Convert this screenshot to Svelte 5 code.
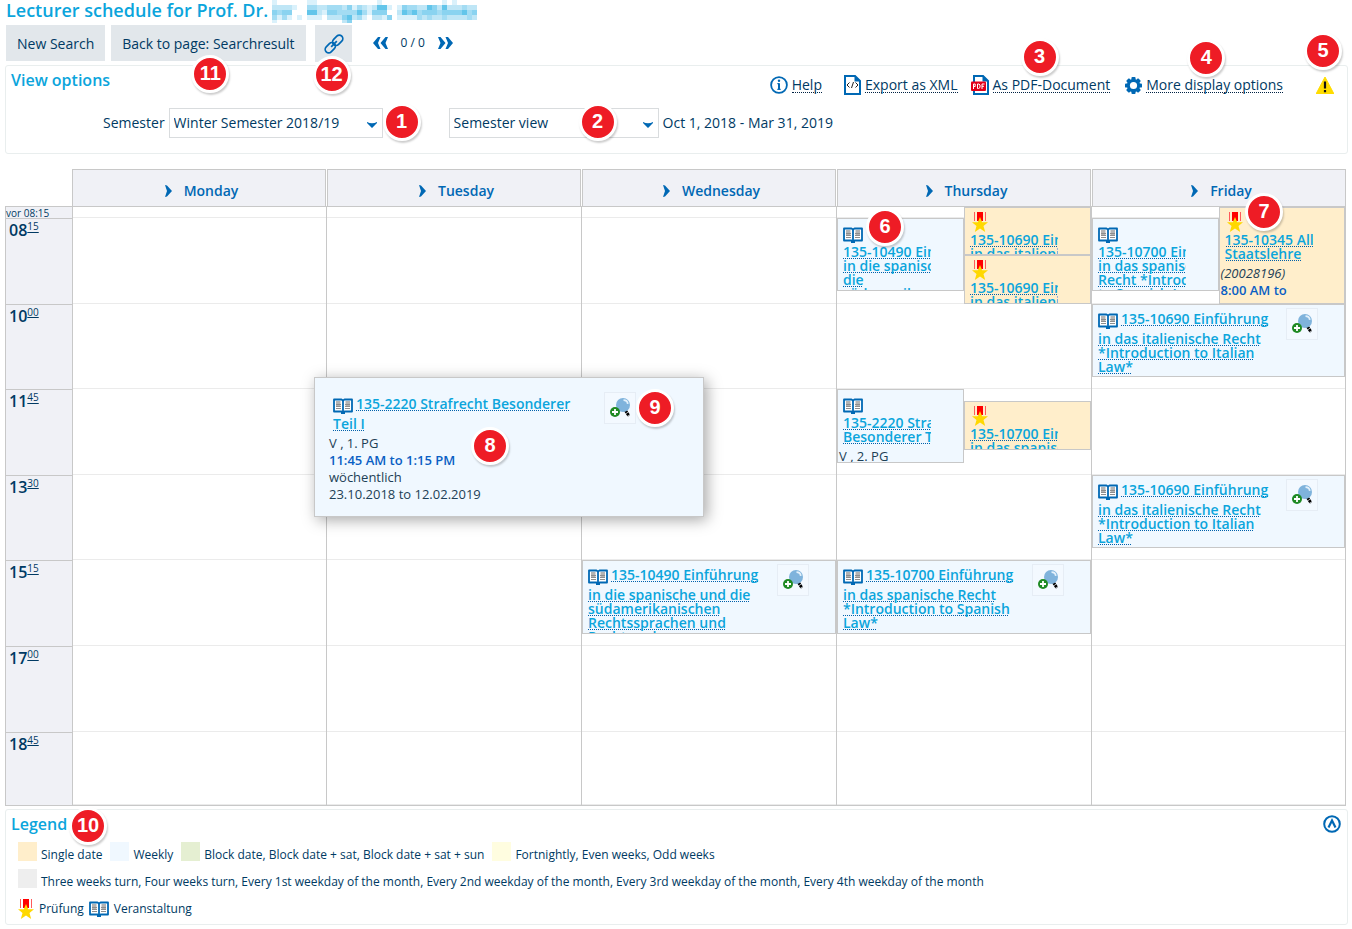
<script lang="ts">
  type Entry = {
    kind: 'book' | 'exam'
    rows: string
    cols: string
    lines: string[]
    wide?: boolean
    note?: string
    number?: string
    time?: string
  }

  // grid rows are quarter hours, row 1 is the strip before 08:15
  const days: { name: string; entries: Entry[] }[] = [
    { name: 'Monday', entries: [] },
    { name: 'Tuesday', entries: [] },
    {
      name: 'Wednesday',
      entries: [
        {
          kind: 'book',
          rows: '30 / 36',
          cols: '1 / 3',
          wide: true,
          lines: ['135-10490 Einführung', 'in die spanische und die', 'südamerikanischen', 'Rechtssprachen und', 'Rechtsordnungen'],
        },
      ],
    },
    {
      name: 'Thursday',
      entries: [
        { kind: 'book', rows: '2 / 8', cols: '1 / 2', lines: ['135-10490 Einführung', 'in die spanische und', 'die', 'südamerikanischen'] },
        { kind: 'exam', rows: '1 / 5', cols: '2 / 3', lines: ['135-10690 Einführung', 'in das italienische'] },
        { kind: 'exam', rows: '5 / 9', cols: '2 / 3', lines: ['135-10690 Einführung', 'in das italienische'] },
        { kind: 'book', rows: '16 / 22', cols: '1 / 2', lines: ['135-2220 Strafrecht', 'Besonderer Teil I'], note: 'V , 2. PG' },
        { kind: 'exam', rows: '17 / 21', cols: '2 / 3', lines: ['135-10700 Einführung', 'in das spanische'] },
        {
          kind: 'book',
          rows: '30 / 36',
          cols: '1 / 3',
          wide: true,
          lines: ['135-10700 Einführung', 'in das spanische Recht', '*Introduction to Spanish', 'Law*'],
        },
      ],
    },
    {
      name: 'Friday',
      entries: [
        { kind: 'book', rows: '2 / 8', cols: '1 / 2', lines: ['135-10700 Einführung', 'in das spanische', 'Recht *Introduction', 'to Spanish Law*'] },
        {
          kind: 'exam',
          rows: '1 / 9',
          cols: '2 / 3',
          lines: ['135-10345 Allgemeine', 'Staatslehre'],
          number: '(20028196)',
          time: '8:00 AM to',
        },
        {
          kind: 'book',
          rows: '9 / 15',
          cols: '1 / 3',
          wide: true,
          lines: ['135-10690 Einführung', 'in das italienische Recht', '*Introduction to Italian', 'Law*'],
        },
        {
          kind: 'book',
          rows: '23 / 29',
          cols: '1 / 3',
          wide: true,
          lines: ['135-10690 Einführung', 'in das italienische Recht', '*Introduction to Italian', 'Law*'],
        },
      ],
    },
  ]

  const slots = [
    { hour: '08', min: '15', rows: '2 / 9' },
    { hour: '10', min: '00', rows: '9 / 16' },
    { hour: '11', min: '45', rows: '16 / 23' },
    { hour: '13', min: '30', rows: '23 / 30' },
    { hour: '15', min: '15', rows: '30 / 37' },
    { hour: '17', min: '00', rows: '37 / 44' },
    { hour: '18', min: '45', rows: '44 / 50' },
  ]

  const legend = [
    [
      { color: '#ffeecb', label: 'Single date' },
      { color: '#f0f8ff', label: 'Weekly' },
      { color: '#e5efd2', label: 'Block date, Block date + sat, Block date + sat + sun' },
      { color: '#fffde0', label: 'Fortnightly, Even weeks, Odd weeks' },
    ],
    [
      {
        color: '#eeeeee',
        label:
          'Three weeks turn, Four weeks turn, Every 1st weekday of the month, Every 2nd weekday of the month, Every 3rd weekday of the month, Every 4th weekday of the month',
      },
    ],
  ]

  // anonymised name, one digit per tile, 0 is empty
  const tiles = [
    '10000001100000000000010000000000001010000',
    '22221003322333241321255101433225425222322',
    '43440005521443333531444002545344434444534',
    '31310101110222452310221401111323223222232',
    '10000000000000240000000000000000000000000',
  ]
  const shades = ['none', '#daf1fb', '#bfe6f6', '#a3dcf3', '#8ad3f0', '#62c5ea']

  let semester = $state('Winter Semester 2018/19')
  let view = $state('Semester view')
</script>

{#snippet badge(n: number)}
  <span class="badge b{n}">{n}</span>
{/snippet}

{#snippet book()}
  <svg class="icon book" width="20" height="16" viewBox="0 0 20 16" aria-hidden="true">
    <path d="M1 1.500h7.500L10 2.500l1.500-1H19v12h-7.500L10 14.800 8.500 13.500H1z" fill="#fff" stroke="#0068b4" stroke-width="1.800" stroke-linejoin="round" />
    <path d="M10 2v13" stroke="#0068b4" stroke-width="1.800" />
    <path d="M8 14h4v2H8z" fill="#0068b4" />
    <path d="M3 3h4.500v5H3zM12.500 3H17v5h-4.500z" fill="#b4b4b4" />
    <path d="M3 6.500h5M3 8.500h5M3 10.500h5M12 6.500h5M12 8.500h5M12 10.500h5" stroke="#8e8e8e" />
  </svg>
{/snippet}

{#snippet medal()}
  <svg class="icon medal" width="16" height="20" viewBox="0 0 16 20" aria-hidden="true">
    <path d="M2.500 0v9M13.500 0v9" stroke="#ff5a5a" />
    <path d="M5 0h6v9H5z" fill="#f00" />
    <path d="M8 5l2.200 5.200H16l-4.500 3.800L13.200 20 8 16.500 2.800 20l1.700-6L0 10.200h5.800z" fill="#ffd800" />
  </svg>
{/snippet}

{#snippet magnifier()}
  <button class="zoom" aria-label="Details">
    <svg width="20" height="20" viewBox="0 0 20 20" aria-hidden="true">
      <path d="M15.500 12.500l3.500 5.500" stroke="#000" stroke-width="3" stroke-dasharray="2.500 .6" />
      <circle cx="13" cy="7" r="7" fill="#7fb3dc" />
      <path d="M13.500 2.200c2 0 4 1.500 4.300 3.600" stroke="#e4f1fb" stroke-width="1.800" fill="none" />
      <circle cx="5" cy="14" r="5" fill="#1f8a24" />
      <path d="M5 11v6M2 14h6" stroke="#fff" stroke-width="1.800" />
    </svg>
  </button>
{/snippet}

<main>
  <h1>
    Lecturer schedule for Prof. Dr.
    <svg class="tiles" width="205" height="23" viewBox="0 0 205 23" shape-rendering="crispEdges" aria-hidden="true">
      {#each tiles as row, y}
        {#each row as tile, x}
          {#if tile !== '0'}
            <rect x={x * 5} y={y * 5} width="5" height="5" fill={shades[Number(tile)]} />
          {/if}
        {/each}
      {/each}
    </svg>
  </h1>

  <div class="toolbar">
    <button>New Search</button>
    <button>Back to page: Searchresult{@render badge(11)}</button>
    <button class="link" aria-label="Permalink">
      <svg width="20" height="20" viewBox="0 0 20 20" fill="none" stroke="#0068b4" stroke-width="1.700" aria-hidden="true">
        <g transform="rotate(-45 10 10)">
          <rect x="-1" y="6.500" width="11.500" height="7" rx="3.500" />
          <rect x="9.500" y="6.500" width="11.500" height="7" rx="3.500" />
          <path d="M6 10h8" />
        </g>
      </svg>
      {@render badge(12)}
    </button>
    <div class="pager">
      <button aria-label="Previous">
        <svg width="15" height="12" viewBox="0 0 15 12" fill="#0068b4" aria-hidden="true">
          <path d="M7.500 0L5 6l2.500 6H5L0 6l5-6zM15 0l-2.500 6 2.500 6h-2.500l-5-6 5-6z" />
        </svg>
      </button>
      <span>0 / 0</span>
      <button aria-label="Next">
        <svg width="15" height="12" viewBox="0 0 15 12" fill="#0068b4" aria-hidden="true">
          <path d="M0 0l2.500 6L0 12h2.500l5-6-5-6zM7.500 0L10 6l-2.500 6H10l5-6-5-6z" />
        </svg>
      </button>
    </div>
  </div>

  <section class="panel options">
    <div class="top">
      <h2>View options</h2>
      <nav>
        <a class="help" href="#help">
          <svg width="18" height="18" viewBox="0 0 18 18" aria-hidden="true">
            <circle cx="9" cy="9" r="7.900" fill="none" stroke="#0068b4" stroke-width="1.800" />
            <path d="M9 7.200v6.600" stroke="#0068b4" stroke-width="2" fill="none" />
            <path d="M7.200 7.700H9M7.200 13.300h3.600" stroke="#0068b4" stroke-width="1" fill="none" />
            <circle cx="9" cy="4.700" r="1.200" fill="#0068b4" />
          </svg>
          <span>Help</span>
        </a>
        <a class="xml" href="#xml">
          <svg width="17" height="20" viewBox="0 0 17 20" aria-hidden="true">
            <path d="M1 1h10l5 5v13H1z" fill="#fff" stroke="#0068b4" stroke-width="2" />
            <path d="M10.500 0v6.500H17z" fill="#0068b4" />
            <path d="M5.500 7.500L3 10l2.500 2.500M11.500 7.500L14 10l-2.500 2.500M9.500 7l-2 6" stroke="#222" fill="none" />
          </svg>
          <span>Export as XML</span>
        </a>
        <a class="pdf" href="#pdf">
          <svg width="18" height="20" viewBox="0 0 18 20" aria-hidden="true">
            <path d="M3 1h9l5 5v13H3z" fill="#fff" stroke="#0068b4" stroke-width="2" />
            <path d="M11.500 0v6.500H18z" fill="#0068b4" />
            <rect y="6.500" width="15" height="9.500" rx="1" fill="#e2001a" />
            <path d="M2.500 14V9h1.700v2.500H2.500M6.500 9v4.500h1L9 12.500V10L8 9zM11 14V9h2.500M11 11.300h2" stroke="#fff" fill="none" />
          </svg>
          <span>As PDF-Document</span>{@render badge(3)}
        </a>
        <a class="more" href="#options">
          <svg width="17" height="17" viewBox="0 0 18 18" aria-hidden="true">
            <g fill="#0068b4">
              {#each [0, 45, 90, 135] as angle}
                <rect x="6.800" y="0" width="4.400" height="18" rx="1" transform="rotate({angle} 9 9)" />
              {/each}
              <circle cx="9" cy="9" r="7" />
            </g>
            <circle cx="9" cy="9" r="3.800" fill="#fff" />
          </svg>
          <span>More display options</span>{@render badge(4)}
        </a>
        <span class="warning">
          <svg width="18" height="17" viewBox="0 0 18 17" role="img" aria-label="Warning">
            <path d="M9 0L18 17H0z" fill="#ffdc00" stroke="#ffdc00" stroke-linejoin="round" />
            <path d="M9 4.500v7M9 13v2.300" stroke="#111" stroke-width="2.200" />
          </svg>
          {@render badge(5)}
        </span>
      </nav>
    </div>

    <div class="fields">
      <label for="semester">Semester</label>
      <div class="select">
        <select id="semester" bind:value={semester}>
          <option>Winter Semester 2018/19</option>
        </select>
        <svg width="10" height="6" viewBox="0 0 10 6" aria-hidden="true"><path d="M0 0q5 2.500 10 0v1L5 6 0 1z" fill="#0068b4" /></svg>
        {@render badge(1)}
      </div>
      <div class="select second">
        <select aria-label="View" bind:value={view}>
          <option>Semester view</option>
        </select>
        <svg width="10" height="6" viewBox="0 0 10 6" aria-hidden="true"><path d="M0 0q5 2.500 10 0v1L5 6 0 1z" fill="#0068b4" /></svg>
        {@render badge(2)}
      </div>
      <span>Oct 1, 2018 - Mar 31, 2019</span>
    </div>
  </section>

  <section class="schedule">
    <div class="head">
      {#each days as day}
        <button>
          <svg width="7" height="12" viewBox="0 0 7 12" aria-hidden="true"><path d="M0 0l2 .5L7 6l-5 5.500-2 .5 2-6z" fill="#0068b4" /></svg>
          {day.name}
        </button>
      {/each}
    </div>

    <div class="body">
      <div class="times">
        <div class="before">vor 08:15</div>
        {#each slots as slot}
          <div class="time" style:grid-row={slot.rows}>{slot.hour}<sup>{slot.min}</sup></div>
        {/each}
      </div>

      {#each days as day}
        <div class="day">
          <div class="line" style:grid-row="1"></div>
          {#each slots as slot}
            <div class="line" style:grid-row={slot.rows}></div>
          {/each}
          {#each day.entries as entry}
            <article class="entry {entry.kind}" class:wide={entry.wide} style:grid-row={entry.rows} style:grid-column={entry.cols}>
              <div class="title">
                {#if entry.kind === 'book'}{@render book()}{:else}{@render medal()}{/if}
                <a href="#entry">
                  {#each entry.lines as line}
                    <span>{line}</span>
                  {/each}
                </a>
              </div>
              {#if entry.note}<p>{entry.note}</p>{/if}
              {#if entry.number}<p><i>{entry.number}</i></p>{/if}
              {#if entry.time}<p><b>{entry.time}</b></p>{/if}
              {#if entry.wide}{@render magnifier()}{/if}
            </article>
          {/each}
          {#if day.name === 'Thursday'}{@render badge(6)}{/if}
          {#if day.name === 'Friday'}{@render badge(7)}{/if}
        </div>
      {/each}

      <article class="entry book wide popup">
        <div class="title">
          {@render book()}
          <a href="#entry">
            <span>135-2220 Strafrecht Besonderer</span>
            <span>Teil I</span>
          </a>
        </div>
        <p>V , 1. PG</p>
        <p><b>11:45 AM to 1:15 PM</b></p>
        <p>wöchentlich</p>
        <p>23.10.2018 to 12.02.2019</p>
        {@render magnifier()}
        {@render badge(8)}
        {@render badge(9)}
      </article>
    </div>
  </section>

  <section class="panel legend">
    <div class="top">
      <h2>Legend{@render badge(10)}</h2>
      <button aria-label="Collapse legend">
        <svg width="18" height="18" viewBox="0 0 18 18" fill="none" stroke="#0068b4" aria-hidden="true">
          <circle cx="9" cy="9" r="7.800" stroke-width="2" />
          <path d="M5.500 12.500L9 5.500l3.500 7" stroke-width="2.200" />
        </svg>
      </button>
    </div>
    {#each legend as row}
      <ul>
        {#each row as item}
          <li><i style:background={item.color}></i>{item.label}</li>
        {/each}
      </ul>
    {/each}
    <ul class="symbols">
      <li>{@render medal()}Prüfung</li>
      <li>{@render book()}Veranstaltung</li>
    </ul>
  </section>
</main>

<style>
  :global(body) {
    margin: 0;
    background: #fff;
  }

  main {
    padding: 0 4px 0 5px;
    font: 14px/20px 'Open Sans', 'Noto Sans', sans-serif;
    color: #003a63;
  }

  button {
    position: relative;
    margin: 0;
    padding: 0;
    border: 0;
    background: none;
    font: inherit;
    color: inherit;
    cursor: pointer;
  }

  svg {
    display: block;
    flex: none;
  }

  h1,
  h2 {
    margin: 0;
    font-weight: 600;
    color: #0ba5dc;
  }

  h1 {
    display: flex;
    gap: 4px;
    height: 25px;
    padding-left: 1px;
    font-size: 18px;
    line-height: 20px;
  }

  h2 {
    position: relative;
    font-size: 16px;
    line-height: 22px;
  }

  .badge {
    position: absolute;
    z-index: 5;
    box-sizing: border-box;
    width: 38px;
    height: 38px;
    border: 3px solid #fff;
    border-radius: 50%;
    background: #ee1c25;
    box-shadow: 1px 2px 2px rgba(0, 0, 0, 0.2);
    font: bold 20px/31px 'Liberation Sans', Arial, sans-serif;
    text-align: center;
    color: #fff;
  }

  .b1 { left: 214px; top: -5px; }
  .b2 { left: 130px; top: -5px; }
  .b3 { left: 50px; top: -37px; }
  .b4 { left: 62px; top: -38px; }
  .b5 { left: -12px; top: -45px; }
  .b6 { left: 29px; top: 1px; }
  .b7 { left: 153px; top: -14px; }
  .b8 { left: 156px; top: 49px; }
  .b9 { left: 321px; top: 11px; }
  .b10 { left: 58px; top: -6px; }
  .b11 { left: 80px; top: 30px; }
  .b12 { left: -2px; top: 31px; }

  .toolbar {
    display: flex;
    align-items: flex-start;
    padding-left: 1px;
  }

  .toolbar > button {
    height: 36px;
    margin-right: 6px;
    padding: 1px 11px 0;
    background: #e2e7eb;
  }

  .toolbar > .link {
    width: 37px;
    height: 37px;
    margin: 0 21px 0 3px;
    padding: 0 9px;
  }

  .pager {
    display: flex;
    align-items: center;
    gap: 13px;
    height: 36px;
    font-size: 12px;
  }

  .panel {
    border: 1px solid #e9eeee;
    border-radius: 3px;
  }

  .options {
    height: 87px;
    margin-top: 3px;
  }

  .top {
    display: flex;
    justify-content: space-between;
    padding: 3px 6px 0 5px;
  }

  nav {
    display: flex;
    align-items: center;
    height: 32px;
    padding-right: 7px;
  }

  nav a,
  .warning {
    position: relative;
    display: flex;
    align-items: center;
    gap: 4px;
    color: inherit;
    text-decoration: none;
  }

  nav a > span:first-of-type {
    border-bottom: 1px dotted #002244;
    line-height: 15px;
  }

  .xml { margin-left: 22px; }
  .pdf { margin-left: 13px; }
  .more { margin-left: 15px; }
  .warning { margin-left: 33px; }

  .fields {
    display: flex;
    align-items: center;
    gap: 4px;
    margin-top: 7px;
    padding-left: 97px;
  }

  .select {
    position: relative;
    width: 214px;
  }

  .select.second {
    width: 210px;
    margin-left: 62px;
  }

  select {
    width: 100%;
    height: 30px;
    padding: 0 4px;
    border: 1px solid #d9dcde;
    border-radius: 0;
    background: #fff;
    appearance: none;
    font: inherit;
    color: inherit;
  }

  .select svg {
    position: absolute;
    right: 6px;
    top: 14px;
  }

  .schedule {
    margin: 15px 2px 3px 0;
  }

  .head {
    display: grid;
    grid-template-columns: repeat(4, 255fr) 254fr;
    margin-left: 67px;
  }

  .head button {
    display: flex;
    align-items: center;
    justify-content: center;
    gap: 12px;
    height: 37px;
    margin-right: 1px;
    padding: 6px 0 0 5px;
    border: 1px solid #c8c8c8;
    border-bottom: 0;
    background: #f0f1f6;
    font-weight: 600;
    color: #0068b4;
  }

  .head button:last-child {
    margin-right: 0;
  }

  .body {
    position: relative;
    display: grid;
    grid-template-columns: 67px repeat(4, 255fr) 254fr;
    height: 599px;
    border-bottom: 1px solid #c8c8c8;
  }

  .times,
  .day {
    position: relative;
    display: grid;
    grid-template-rows: 11px repeat(48, minmax(0, 1fr));
    border-top: 1px solid #c8c8c8;
    border-right: 1px solid #c8c8c8;
    min-width: 0;
    min-height: 0;
  }

  .times {
    border-left: 1px solid #c8c8c8;
    border-right: 0;
    background: #f0f1f6;
  }

  .day {
    grid-template-columns: repeat(2, minmax(0, 1fr));
  }

  .times + .day {
    border-left: 1px solid #c8c8c8;
  }

  .before {
    font-size: 10px;
    line-height: 13px;
  }

  .time {
    padding: 1px 0 0 3px;
    border-top: 1px solid #c8c8c8;
    font-size: 16px;
    font-weight: 600;
  }

  .time sup {
    font-size: 10px;
    font-weight: 400;
    line-height: 1px;
    text-decoration: underline;
    text-underline-offset: 2px;
  }

  .line {
    grid-column: 1 / 3;
    border-bottom: 1px solid #ebebeb;
  }

  .entry {
    position: relative;
    box-sizing: border-box;
    min-width: 0;
    min-height: 0;
    padding: 8px 0 0 1px;
    border: 1px solid #c8c8c8;
    background: #f0f8ff;
    overflow: hidden;
    font-size: 13px;
    line-height: 17px;
  }

  .entry.exam {
    padding-top: 4px;
    background: #ffeecb;
  }

  .entry p {
    margin: 0;
    color: #1d3f56;
    white-space: nowrap;
  }

  .entry b {
    font-weight: 600;
    color: #0a5fc4;
  }

  .title {
    width: 88px;
    margin-left: 4px;
    overflow: hidden;
    font-size: 14px;
    font-weight: 600;
    line-height: 14px;
    padding-bottom: 4px;
  }

  .title a {
    color: #0ba5dc;
    text-decoration: underline dotted #0060aa 1px;
    text-decoration-skip-ink: none;
    text-underline-offset: 1px;
  }

  .title span {
    display: table;
    white-space: nowrap;
  }

  .title .medal {
    margin: 0 0 1px 2px;
  }

  .book .title .book {
    margin-bottom: 2px;
  }

  .entry.wide {
    padding-top: 4px;
  }

  .wide .title {
    width: auto;
  }

  .wide .title .book {
    float: left;
    margin: 4px 3px 0 0;
  }

  .wide .title span:first-child {
    margin-bottom: 3px;
    line-height: 20px;
    text-underline-offset: 2px;
  }

  .zoom {
    position: absolute;
    right: 26px;
    top: 3px;
    box-sizing: border-box;
    width: 32px;
    height: 32px;
    padding: 5px;
    border: 1px solid #e6edf5;
    background: #f3f9ff;
  }

  .entry.popup {
    position: absolute;
    left: 309px;
    top: 171px;
    z-index: 3;
    width: 390px;
    height: 140px;
    padding: 16px 14px 0;
    box-shadow: 3px 3px 14px rgba(0, 0, 0, 0.35);
  }

  .popup .zoom {
    right: 67px;
    top: 14px;
  }

  .legend {
    padding-bottom: 2px;
    font-size: 12px;
  }

  .legend .top {
    padding-bottom: 6px;
  }

  .legend ul {
    display: flex;
    gap: 8px;
    margin: 0;
    padding: 0 0 0 12px;
    list-style: none;
  }

  .legend li {
    display: flex;
    align-items: center;
    gap: 4px;
    height: 27px;
  }

  .legend li > i {
    width: 19px;
    height: 19px;
    margin-bottom: 6px;
  }

  .legend .symbols {
    gap: 5px;
  }

  .legend .symbols li {
    gap: 5px;
  }
</style>
